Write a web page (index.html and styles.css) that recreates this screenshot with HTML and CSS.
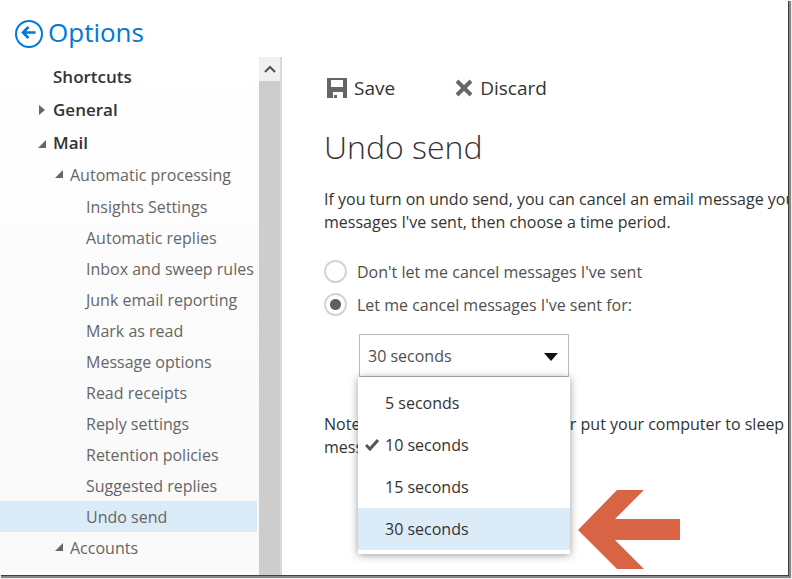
FILE: index.html
```
<!DOCTYPE html>
<html lang="en">
<head>
    <meta charset="UTF-8">
    <meta name="viewport" content="width=device-width, initial-scale=1.0">
    <title>Options</title>
    <link rel="stylesheet" href="styles.css">
</head>
<body>
    <div class="window">
        <header class="header">
            <a href="#" class="back-link">
                <svg class="back-icon" width="30" height="30" viewBox="0 0 30 30" fill="none" stroke="currentColor" stroke-width="2">
                    <circle cx="15" cy="15" r="13"></circle>
                    <path d="M21.500 13.500H9.500M14.500 8L9 13.500l5.500 5.500" stroke-width="2.600"></path>
                </svg>
                Options
            </a>
        </header>

        <div class="layout">
            <div class="sidebar">
                <nav class="nav">
                    <a href="#" class="nav-top">Shortcuts</a>
                    <a href="#" class="nav-top">
                        <svg class="caret" width="8" height="12" viewBox="0 0 8 12"><path d="M1 1l6 5-6 5z"></path></svg>
                        General
                    </a>
                    <a href="#" class="nav-top">
                        <svg class="caret" width="8" height="12" viewBox="0 0 8 12"><path d="M8 3v8H0z"></path></svg>
                        Mail
                    </a>
                    <a href="#" class="nav-group">
                        <svg class="caret" width="8" height="12" viewBox="0 0 8 12"><path d="M8 1v8H0z"></path></svg>
                        Automatic processing
                    </a>
                    <a href="#" class="nav-item">Insights Settings</a>
                    <a href="#" class="nav-item">Automatic replies</a>
                    <a href="#" class="nav-item">Inbox and sweep rules</a>
                    <a href="#" class="nav-item">Junk email reporting</a>
                    <a href="#" class="nav-item">Mark as read</a>
                    <a href="#" class="nav-item">Message options</a>
                    <a href="#" class="nav-item">Read receipts</a>
                    <a href="#" class="nav-item">Reply settings</a>
                    <a href="#" class="nav-item">Retention policies</a>
                    <a href="#" class="nav-item">Suggested replies</a>
                    <a href="#" class="nav-item selected">Undo send</a>
                    <a href="#" class="nav-group">
                        <svg class="caret" width="8" height="12" viewBox="0 0 8 12"><path d="M8 1v8H0z"></path></svg>
                        Accounts
                    </a>
                </nav>
                <div class="scrollbar">
                    <button class="scroll-up" aria-label="Scroll up">
                        <svg width="12" height="8" viewBox="0 0 12 8" fill="none" stroke="#505050" stroke-width="2"><path d="M1 7l5-5 5 5"></path></svg>
                    </button>
                </div>
            </div>

            <main class="content">
                <div class="toolbar">
                    <button class="tool-button">
                        <svg width="20" height="20" viewBox="0 0 20 20">
                            <path d="M0 0h20v20h-4v-6H6v6H0zM4 2v7h12V2zM7 17h3v3H7z" fill="#666" fill-rule="evenodd"></path>
                        </svg>
                        Save
                    </button>
                    <button class="tool-button">
                        <svg width="18" height="18" viewBox="0 0 18 18" fill="none" stroke="#666" stroke-width="4"><path d="M2 2l14 14M16 2L2 16"></path></svg>
                        Discard
                    </button>
                </div>

                <h1>Undo send</h1>
                <p class="intro">If you turn on undo send, you can cancel an email message you've sent. To cancel<br>messages I've sent, then choose a time period.</p>

                <div class="choices">
                    <label class="choice">
                        <input type="radio" name="undo">
                        Don't let me cancel messages I've sent
                    </label>
                    <label class="choice">
                        <input type="radio" name="undo" checked>
                        Let me cancel messages I've sent for:
                    </label>
                </div>

                <div class="dropdown">
                    <select class="period" aria-label="Time period">
                        <option>5 seconds</option>
                        <option>10 seconds</option>
                        <option>15 seconds</option>
                        <option selected>30 seconds</option>
                    </select>
                    <svg class="period-arrow" width="14" height="8" viewBox="0 0 14 8"><path d="M0 0h14L7 8z" fill="#111"></path></svg>
                    <ul class="menu" role="listbox" aria-label="Time period">
                        <li role="option">5 seconds</li>
                        <li role="option">
                            <svg class="check" width="14" height="12" viewBox="0 0 14 12" fill="none" stroke="#555" stroke-width="3"><path d="M1 6l4 4 8-9"></path></svg>
                            10 seconds
                        </li>
                        <li role="option">15 seconds</li>
                        <li role="option" class="active" aria-selected="true">30 seconds</li>
                    </ul>
                    <svg class="pointer" width="102" height="80" viewBox="0 0 102 80"><path d="M0 40L39 0h27L37 29h65v21H37l29 29H39z" fill="#d96445"></path></svg>
                </div>

                <p class="note">Note: If you close your browser or put your computer to sleep after you send<br>message.</p>
            </main>
        </div>
    </div>
</body>
</html>
```
FILE: styles.css
```
* {
    box-sizing: border-box;
}

body {
    margin: 0;
    height: 100vh;
    padding: 0 4px 4px 0;
    overflow: hidden;
    background-color: #fff;
    color: #333;
    font-family: "Open Sans", "Noto Sans", sans-serif;
    font-size: 16px;
}

.window {
    display: flex;
    flex-direction: column;
    height: 100%;
    background-color: #fff;
    box-shadow: 1px 1px 0 #404040, 2px 2px 1px 1px #888;
}

a {
    color: inherit;
    text-decoration: none;
}

button {
    border: none;
    padding: 0;
    background: none;
    color: inherit;
    font: inherit;
    cursor: pointer;
}

.header {
    flex: none;
    height: 57px;
    padding: 14px 14px 0;
}

.back-link {
    display: inline-flex;
    align-items: center;
    gap: 4px;
    color: #0078d7;
    font-size: 26px;
    line-height: 36px;
}

.back-icon {
    margin-top: 4px;
}

.layout {
    display: flex;
    flex: 1;
    min-height: 0;
}

/* Sidebar */
.sidebar {
    display: flex;
    flex: none;
    border-right: 2px solid #d8d8d8;
    background: linear-gradient(#fff, #fafafa 70%);
}

.nav {
    width: 257px;
    padding-top: 3px;
    overflow: hidden;
    color: #666;
    white-space: nowrap;
}

.nav-top,
.nav-group,
.nav-item {
    display: flex;
    align-items: center;
}

.nav-top {
    height: 33px;
    padding-left: 53px;
    color: #333;
    font-size: 17px;
    font-weight: 600;
}

.nav-group {
    height: 32px;
    padding-left: 70px;
}

.nav-item {
    height: 31px;
    padding-left: 86px;
}

.nav-item.selected {
    background-color: #dcebf8;
}

.caret {
    margin: 0 7px 0 -15px;
    fill: #666;
}

.scrollbar {
    width: 21px;
    margin-left: 2px;
    background-color: #cdcdcd;
}

.scroll-up {
    display: flex;
    align-items: center;
    justify-content: center;
    width: 100%;
    height: 24px;
    background-color: #f0f0f0;
}

/* Undo send pane */
.content {
    flex: 1;
    min-width: 0;
    padding: 16px 0 0 42px;
    overflow: hidden;
}

.toolbar {
    display: flex;
    gap: 60px;
    padding-left: 3px;
}

.tool-button {
    display: flex;
    align-items: center;
    gap: 7px;
    font-size: 19px;
    line-height: 30px;
}

h1 {
    margin: 20px 0 0;
    font-size: 32px;
    font-weight: 300;
    line-height: 48px;
}

.intro,
.note {
    margin: 0;
    line-height: 23px;
    white-space: nowrap;
}

.intro {
    margin-top: 17px;
}

.choices {
    margin-top: 21px;
}

.choice {
    display: flex;
    align-items: center;
    gap: 10px;
    height: 33px;
    color: #505050;
}

.choice input {
    appearance: none;
    width: 23px;
    height: 23px;
    margin: 0;
    border: 2px solid #d4d4d4;
    border-radius: 50%;
    background-color: #fff;
}

.choice input:checked {
    background: radial-gradient(circle, #606060 5px, #fff 6px);
}

.dropdown {
    position: relative;
    width: 210px;
    margin: 13px 0 0 35px;
}

.period {
    appearance: none;
    display: block;
    width: 100%;
    height: 43px;
    padding: 0 8px;
    border: 1px solid #bababa;
    border-radius: 0;
    background-color: #fff;
    color: #505050;
    font: inherit;
}

.period-arrow {
    position: absolute;
    top: 19px;
    right: 11px;
    pointer-events: none;
}

.menu {
    position: absolute;
    top: 100%;
    left: -1px;
    width: 212px;
    margin: 0;
    padding: 5px 0 4px;
    background-color: #fff;
    box-shadow: 0 1px 8px rgba(0, 0, 0, 0.4);
    list-style: none;
}

.menu li {
    display: flex;
    align-items: center;
    height: 42px;
    padding-left: 27px;
}

.menu .active {
    background-color: #dcebf8;
}

.check {
    margin: 0 6px 0 -20px;
}

.pointer {
    position: absolute;
    top: 156px;
    left: 219px;
}

.note {
    margin-top: 36px;
}
```
